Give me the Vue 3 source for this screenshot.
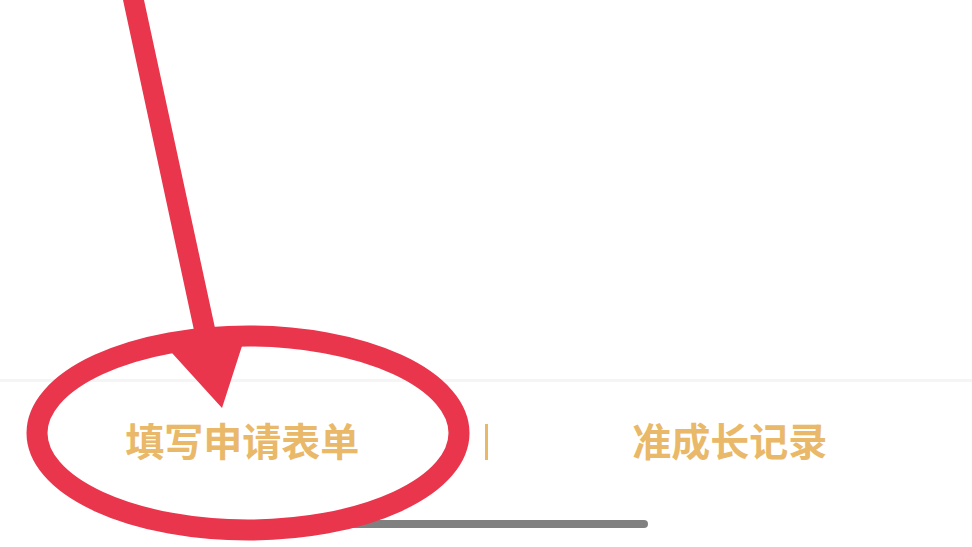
<template>
  <div class="page">
    <div class="content"></div>
    <div class="footer">
      <div class="action">填写申请表单</div>
      <div class="divider"></div>
      <div class="action">准成长记录</div>
    </div>
    <div class="home-bar"></div>
    <!-- red annotation drawn over the screenshot -->
    <svg class="markup" width="972" height="547" viewBox="0 0 972 547">
      <ellipse cx="248" cy="433" rx="211" ry="97" fill="none" stroke="#e9364c" stroke-width="21" />
      <path d="M123 0 L144 0 L215 328 L242 346 L222 408 L172 353 L195 335 Z" fill="#e9364c" />
    </svg>
  </div>
</template>
<script setup>
</script>
<style>
html,
body {
  margin: 0;
  background: #fff;
}
</style>
<style scoped>
.page {
  position: relative;
  width: 972px;
  height: 547px;
  overflow: hidden;
  background: #fff;
}

.content {
  height: 379px;
  border-bottom: 3px solid #f5f5f5;
}

.footer {
  display: flex;
  align-items: center;
  height: 120px;
}

.action {
  flex: 1;
  margin-bottom: 7px;
  text-align: center;
  font-family: "Noto Sans CJK SC", sans-serif;
  font-size: 39px;
  font-weight: 700;
  color: #e9b868;
}

.divider {
  width: 3px;
  height: 36px;
  background: #e9b868;
}

.home-bar {
  width: 324px;
  height: 8px;
  margin: 18px auto 0;
  border-radius: 4px;
  background: #808080;
}

.markup {
  position: absolute;
  top: 0;
  left: 0;
}
</style>
